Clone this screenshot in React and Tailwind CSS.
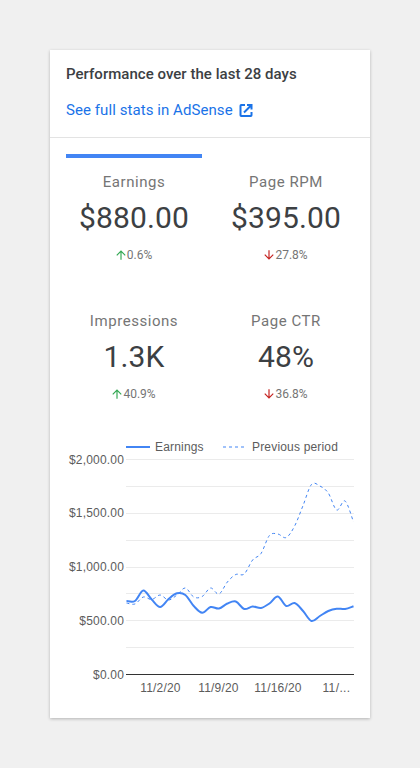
import React from "react";

const METRICS = [
  { label: "Earnings", value: "$880.00", delta: "0.6%", up: true, active: true },
  { label: "Page RPM", value: "$395.00", delta: "27.8%", up: false },
  { label: "Impressions", value: "1.3K", delta: "40.9%", up: true },
  { label: "Page CTR", value: "48%", delta: "36.8%", up: false },
];

// Vertical plot positions of the daily values, one per day
const EARNINGS = [
  601, 601, 590.5, 599.5, 607, 599, 593.3, 595, 606, 612.8, 607, 608.5, 603.5, 601.5,
  609, 606.5, 608, 603.5, 596.5, 606, 603, 611, 621, 616, 611, 608.7, 609, 606.3,
];
const PREVIOUS = [
  603, 604, 597, 599.5, 595, 600, 595, 588, 597, 596.5, 588, 594, 582, 574.5,
  574, 560, 553.5, 535.5, 534, 537.5, 526, 505.5, 484.5, 486, 493, 510, 501, 522,
];

// Smooth curve whose tangent at each day follows its neighbours
function smoothPath(values) {
  const pts = values.map((y, i) => [76.5 + (i * 227) / 27, y - 430]);
  let d = `M${pts[0][0]} ${pts[0][1]}`;
  for (let i = 0; i < pts.length - 1; i++) {
    const a = pts[Math.max(i - 1, 0)];
    const b = pts[i];
    const c = pts[i + 1];
    const e = pts[Math.min(i + 2, pts.length - 1)];
    const t = 1 / 6;
    d += `C${b[0] + (c[0] - a[0]) * t} ${b[1] + (c[1] - a[1]) * t} ${c[0] - (e[0] - b[0]) * t} ${c[1] - (e[1] - b[1]) * t} ${c[0]} ${c[1]}`;
  }
  return d;
}

function Metric({ label, value, delta, up, active }) {
  return (
    <div className="flex h-[139px] flex-col items-center">
      <div className={active ? "h-1 w-full bg-[#4285f4]" : "h-1 w-full"} />
      <div className="mt-3 text-[15px] leading-6 tracking-[0.55px] text-[#757575]">{label}</div>
      <div className="mt-[6px] text-[30px] leading-9 tracking-[0.1px] text-[#3c4043]">{value}</div>
      <div className="mt-[10px] mr-px flex items-center pr-px text-xs leading-[18px] text-[#757575]">
        <svg
          className={up ? "-mr-px h-3.5 w-3.5 text-[#34a853]" : "-mr-px h-3.5 w-3.5 text-[#c5221f]"}
          viewBox="0 0 24 24"
          fill="currentColor"
        >
          {up ? (
            <path d="M4 12l1.41 1.41L11 7.83V20h2V7.83l5.58 5.59L20 12l-8-8-8 8z" />
          ) : (
            <path d="M20 12l-1.41-1.41L13 16.17V4h-2v12.17l-5.58-5.59L4 12l8 8 8-8z" />
          )}
        </svg>
        <span>{delta}</span>
      </div>
    </div>
  );
}

function Chart() {
  return (
    <svg
      className="block h-[288px] w-[320px]"
      viewBox="0 0 320 288"
      fontFamily="'Liberation Sans', Arial, sans-serif"
      fontSize="12"
      letterSpacing="0.18"
      fill="#5c5c5c"
    >
      <rect x="76" y="16" width="24" height="2" fill="#4285f4" />
      <text x="105" y="21">Earnings</text>
      <path d="M173 17H195" stroke="#a0c2fa" strokeWidth="2" strokeDasharray="3" />
      <text x="202" y="21">Previous period</text>
      {[29, 56, 83, 110, 137, 163, 190, 217].map((y) => (
        <rect key={y} x="76" y={y} width="228" height="1" fill="#ebebeb" />
      ))}
      <rect x="76" y="244" width="228" height="1" fill="#333333" />
      <path d={smoothPath(EARNINGS)} fill="none" stroke="#4285f4" strokeWidth="2" />
      <path d={smoothPath(PREVIOUS)} fill="none" stroke="#4285f4" strokeWidth="1" strokeDasharray="3" />
      <g textAnchor="end">
        <text x="74" y="34">$2,000.00</text>
        <text x="74" y="87">$1,500.00</text>
        <text x="74" y="141">$1,000.00</text>
        <text x="74" y="195">$500.00</text>
        <text x="74" y="249">$0.00</text>
      </g>
      <g textAnchor="middle">
        <text x="110.5" y="262">11/2/20</text>
        <text x="168.5" y="262">11/9/20</text>
        <text x="228" y="262">11/16/20</text>
        <text x="286.5" y="262" letterSpacing="0.4">11/...</text>
      </g>
    </svg>
  );
}

export default function App() {
  return (
    <div className="flex h-[768px] w-[420px] items-start justify-center bg-[#f0f0f0] pt-[50px] font-['Roboto',sans-serif]">
      <main className="h-[668px] w-[320px] bg-white shadow-[0_1px_3px_rgba(0,0,0,0.25)]">
        <header className="h-[88px] border-b border-[#e3e3e3] px-4 pt-3">
          <h1 className="text-[15px] leading-6 font-medium tracking-[0.03px] whitespace-nowrap text-[#3c4043]">
            Performance over the last 28 days
          </h1>
          <a className="mt-3 flex items-center text-[15px] leading-6 tracking-[0.07px] text-[#1a73e8]">
            See full stats in AdSense
            <svg className="ml-[5px] h-4 w-4" viewBox="0 0 16 16" fill="none" stroke="currentColor" strokeWidth="2">
              <path d="M7 3H3.200Q2.500 3 2.500 3.700V13.300Q2.500 14 3.200 14H12.800Q13.500 14 13.500 13.300V10" />
              <path d="M9 3H13.500V7.500M13 3.500L6 10.500" />
            </svg>
          </a>
        </header>
        <section className="grid h-[292px] grid-cols-2 content-start gap-x-4 px-4 pt-4">
          {METRICS.map((m) => (
            <Metric key={m.label} {...m} />
          ))}
        </section>
        <Chart />
      </main>
    </div>
  );
}
